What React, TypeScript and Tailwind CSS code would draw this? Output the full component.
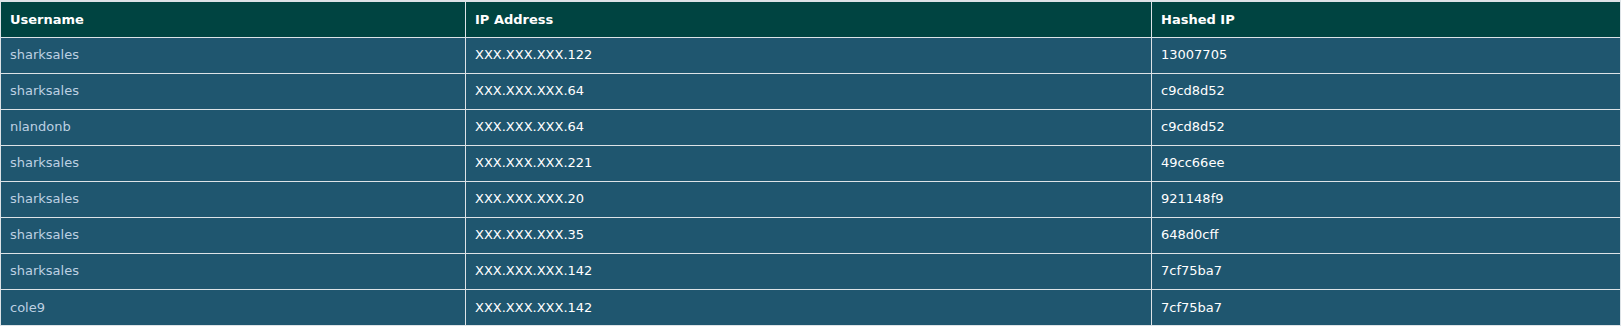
const rows = [
  ["sharksales", "XXX.XXX.XXX.122", "13007705"],
  ["sharksales", "XXX.XXX.XXX.64", "c9cd8d52"],
  ["nlandonb", "XXX.XXX.XXX.64", "c9cd8d52"],
  ["sharksales", "XXX.XXX.XXX.221", "49cc66ee"],
  ["sharksales", "XXX.XXX.XXX.20", "921148f9"],
  ["sharksales", "XXX.XXX.XXX.35", "648d0cff"],
  ["sharksales", "XXX.XXX.XXX.142", "7cf75ba7"],
  ["cole9", "XXX.XXX.XXX.142", "7cf75ba7"],
];

export default function App() {
  return (
    <div className="w-[1621px] h-[326px] overflow-hidden bg-[#dde3e7] pt-[2px] font-['DejaVu_Sans',Verdana,sans-serif] text-[13px]">
      <table className="w-full border-collapse table-fixed">
        <colgroup>
          <col className="w-[465px]" />
          <col className="w-[686px]" />
          <col />
        </colgroup>
        <thead>
          <tr className="bg-[#004441] text-white h-[35px]">
            <th className="text-left font-bold px-[9px] border-l border-r border-[#dde3e7]">Username</th>
            <th className="text-left font-bold px-[9px] border-l border-r border-[#dde3e7]">IP Address</th>
            <th className="text-left font-bold px-[9px] border-l border-r border-[#dde3e7]">Hashed IP</th>
          </tr>
        </thead>
        <tbody>
          {rows.map((r, i) => (
            <tr key={i} className="bg-[#1f566f] h-[36px] border-t border-[#dde3e7]">
              <td className="px-[9px] text-[#bdd0e2] border-l border-r border-[#dde3e7]">{r[0]}</td>
              <td className="px-[9px] text-white border-l border-r border-[#dde3e7]">{r[1]}</td>
              <td className="px-[9px] text-white border-l border-r border-[#dde3e7]">{r[2]}</td>
            </tr>
          ))}
        </tbody>
      </table>
    </div>
  );
}
